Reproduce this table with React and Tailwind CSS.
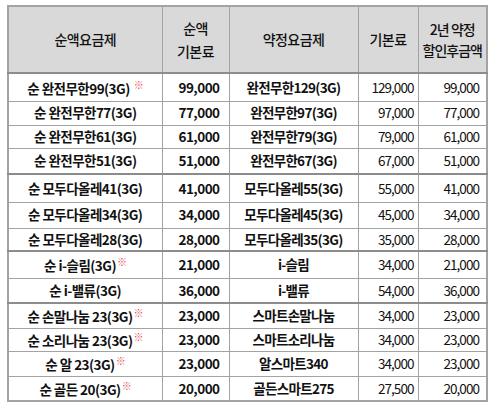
import React from "react";

const rows = [
  { n: "순 완전무한99(3G)", s: true, gap: true, p: "99,000", rn: "완전무한129(3G)", b: "129,000", d: "99,000", h: "h-[28px]" },
  { n: "순 완전무한77(3G)", p: "77,000", rn: "완전무한97(3G)", b: "97,000", d: "77,000", h: "h-[24px]" },
  { n: "순 완전무한61(3G)", p: "61,000", rn: "완전무한79(3G)", b: "79,000", d: "61,000", h: "h-[23px]" },
  { n: "순 완전무한51(3G)", p: "51,000", rn: "완전무한67(3G)", b: "67,000", d: "51,000", h: "h-[26px]", sep: true },
  { n: "순 모두다올레41(3G)", p: "41,000", rn: "모두다올레55(3G)", b: "55,000", d: "41,000", h: "h-[28px]" },
  { n: "순 모두다올레34(3G)", p: "34,000", rn: "모두다올레45(3G)", b: "45,000", d: "34,000", h: "h-[26px]" },
  { n: "순 모두다올레28(3G)", p: "28,000", rn: "모두다올레35(3G)", b: "35,000", d: "28,000", h: "h-[23px]", sep: true },
  { n: "순 i-슬림(3G)", s: true, p: "21,000", rn: "i-슬림", b: "34,000", d: "21,000", h: "h-[27px]" },
  { n: "순 i-밸류(3G)", p: "36,000", rn: "i-밸류", b: "54,000", d: "36,000", h: "h-[25px]", sep: true },
  { n: "순 손말나눔 23(3G)", s: true, p: "23,000", rn: "스마트손말나눔", b: "34,000", d: "23,000", h: "h-[25px]" },
  { n: "순 소리나눔 23(3G)", s: true, p: "23,000", rn: "스마트소리나눔", b: "34,000", d: "23,000", h: "h-[23px]" },
  { n: "순 알 23(3G)", s: true, p: "23,000", rn: "알스마트340", b: "34,000", d: "23,000", h: "h-[25px]" },
  { n: "순 골든 20(3G)", s: true, p: "20,000", rn: "골든스마트275", b: "27,500", d: "20,000", h: "h-[25px]" },
];

export default function App() {
  return (
    <div
      className="w-[493px] h-[420px] bg-white pt-[5px] pl-[7px] text-[#111]"
      style={{ fontFamily: '"Noto Sans CJK KR", "Noto Sans", sans-serif' }}
    >
      <table className="border-collapse border-2 border-[#a3a3a3] table-fixed w-[479px]">
        <colgroup>
          <col className="w-[154px]" />
          <col className="w-[67px]" />
          <col className="w-[129px]" />
          <col className="w-[60px]" />
          <col className="w-[69px]" />
        </colgroup>
        <thead>
          <tr className="bg-[#d9d9d9] h-[67px] text-[14px] font-medium leading-[23px] tracking-[-0.04em]">
            <th className="border border-[#a3a3a3] border-b-2 border-b-[#8c8c8c] font-medium">순액요금제</th>
            <th className="border border-[#a3a3a3] border-b-2 border-b-[#8c8c8c] font-medium">
              순액
              <br />
              기본료
            </th>
            <th className="border border-[#a3a3a3] border-b-2 border-b-[#8c8c8c] font-medium">약정요금제</th>
            <th className="border border-[#a3a3a3] border-b-2 border-b-[#8c8c8c] font-medium">기본료</th>
            <th className="border border-[#a3a3a3] border-b-2 border-b-[#8c8c8c] font-medium leading-[21px] tracking-[-0.07em]">
              2년 약정
              <br />
              할인후금액
            </th>
          </tr>
        </thead>
        <tbody>
          {rows.map((r, i) => {
            const bb = r.sep ? "border-b-2 border-b-[#8c8c8c]" : "";
            return (
              <tr key={i} className={`${r.h} text-[13.5px] leading-none tracking-[-0.04em]`}>
                <td className={`border border-[#a3a3a3] ${bb} text-center font-bold whitespace-nowrap`}>
                  {r.n}
                  {r.s && (
                    <span className={`text-[#e8505a] text-[10px] font-bold align-[5px] ${r.gap ? "ml-[4px]" : "ml-[1px]"}`}>※</span>
                  )}
                </td>
                <td className={`border border-[#a3a3a3] ${bb} text-right pr-[9px] font-bold`}>{r.p}</td>
                <td className={`border border-[#a3a3a3] ${bb} text-center font-bold tracking-[-0.05em] whitespace-nowrap`}>{r.rn}</td>
                <td className={`border border-[#a3a3a3] ${bb} text-right pr-[4px] tracking-[-0.07em]`}>{r.b}</td>
                <td className={`border border-[#a3a3a3] ${bb} text-right pr-[7px] tracking-[-0.07em]`}>{r.d}</td>
              </tr>
            );
          })}
        </tbody>
      </table>
    </div>
  );
}
